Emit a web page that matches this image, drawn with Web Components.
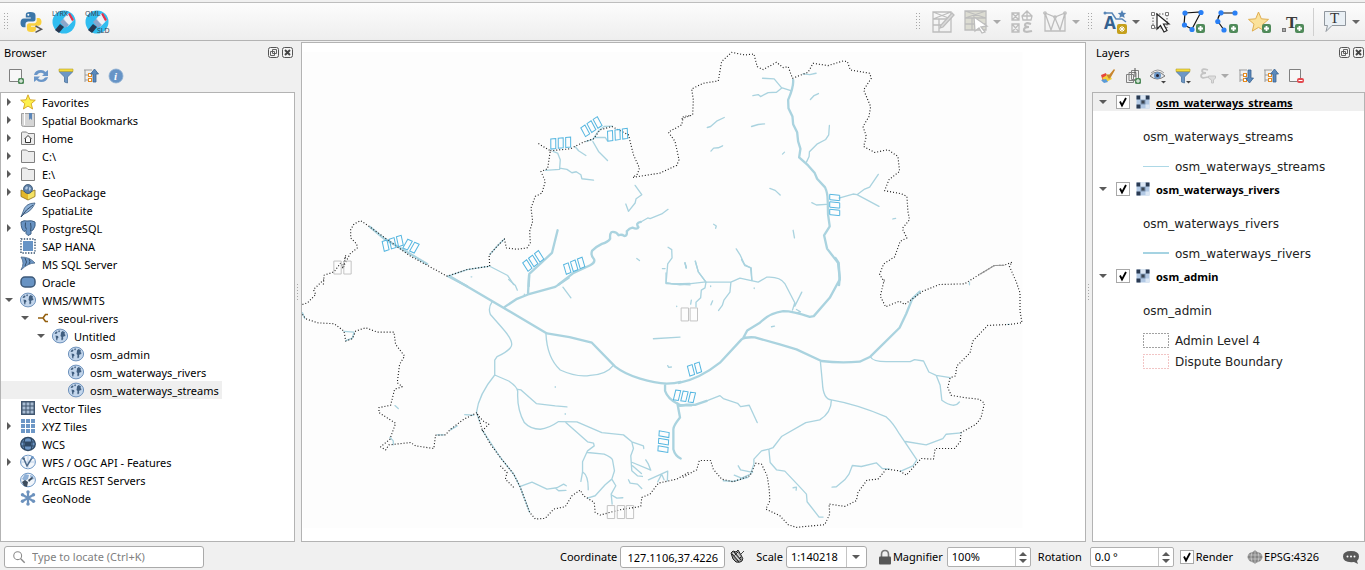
<!DOCTYPE html>
<html lang="en">
<head>
<meta charset="utf-8">
<title>Map workspace</title>
<style>
  html, body { margin: 0; height: 100%; }
  body {
    font: 11px/18px "Noto Sans", "Open Sans", sans-serif;
    color: #000;
    background: #f0f0f0;
  }
</style>
</head>
<body>
<map-workspace></map-workspace>

<script>
/* ---------- icon drawings ---------- */
const PLUS = (x, y) => `<rect x="${x}" y="${y}" width="9" height="9" rx="2" fill="#508a5a"/><path d="M${x + 4.5} ${y + 2}v5M${x + 2} ${y + 4.5}h5" stroke="#fff" stroke-width="1.8"/>`;
const PLUS_S = (x, y) => `<rect x="${x}" y="${y}" width="6" height="6" rx="1.5" fill="#508a5a"/><path d="M${x + 3} ${y + 1}v4M${x + 1} ${y + 3}h4" stroke="#fff" stroke-width="1"/>`;
const GLOBE = `<ellipse cx="8" cy="8" rx="7.600" ry="6.900" fill="#c3d6ec" stroke="#6f93bd" stroke-width="1"/><path d="M2.500 5.500l1.500-2 1.500.3-.3 1.500-1.500.7zM6 3l1.500-.8.5 1-1 1.300zM3.500 7.500l2.500.5.5 1.500-1 1-.2 2-1-.3-.3-2zM9 4.500l1.500-1.500 1 .5 1.500 1-.5 1.500 1 1-.5 1.500-1-.5-1 1.500.3 1.500-1.300 1.500-.7-1 .2-2.500-1-1 .3-1.500z" fill="#415f80"/>`;
const PAINT = `<circle cx="12" cy="12" r="11.500" fill="#30bdf0"/><path d="M11 9l6-6 5 7-7 7z" fill="#d4dbe8"/><path d="M16 4l2-1 4 7-2 1z" fill="#e3314c"/><path d="M12 8l4-4 4 8-4 4z" fill="#eef1f7"/><path d="M8 12l3-3 6 6-4 3z" fill="#8ba6ca"/><path d="M8 14l4 3-5 6-4-3z" fill="#27374f"/>`;
const TREE = `<path d="M1 2h8M2 2v12M2 7h3M2 12h3" stroke="#9a9a9a" fill="none"/><rect x="5.500" y="5.500" width="3" height="3" fill="#fff" stroke="#e68a1e"/><rect x="5.500" y="10.500" width="3" height="3" fill="#fff" stroke="#e68a1e"/>`;
const FUNNEL = `<path d="M1.500 2h13v2l-5 5v6l-3-1V9l-5-5z" fill="#6d97c6" stroke="#4c739d" stroke-width=".8"/><path d="M1 1h14v2.500H1z" fill="#f5dc3b" stroke="#b3a02c" stroke-width=".6"/>`;
const FOLDER = `<path d="M1.500 3q0-1 1-1h4l1.500 1.500h6.500v11h-13z" fill="#ececec" stroke="#808080"/>`;
const GRAYNET = (a) => `<g fill="none" stroke="#bdbdbd" stroke-width="1.300">${a}</g>`;
const LETTER = (x, y, s, t, c, extra = '') => `<text x="${x}" y="${y}" font-size="${s}" fill="${c}" ${extra}>${t}</text>`;

const ICONS = {
  python: [24, `<path d="M11.500 2c-4 0-4.700 1-4.700 3.300V7.500h5v.9H5C2.500 8.400 1.500 10.500 1.500 13s1.200 4.200 3 4.200H6.500v-2.900c0-1.800 1.300-2.800 2.800-2.800h4.900c1.300 0 2.300-1 2.300-2.300V5.300c0-2.300-1.900-3.300-5-3.300z" fill="#3b76a8"/><path d="M12.200 22c4 0 4.700-1 4.700-3.300v-2H12v-1h7.500c2.300 0 3-2 3-3.900s-1-3.800-3-3.800h-1.800v2.400c0 1.800-1.300 2.900-2.800 2.900h-4.700c-1.300 0-2.300 1-2.300 2.300v3.100c0 2.300 1.400 3.300 4.300 3.300z" fill="#fad13f"/><circle cx="9.300" cy="4.800" r="1" fill="#fff"/><path d="M16.500 16l6 3.200-6 3.200" fill="none" stroke="#555" stroke-width="1.500"/>`],
  lyrx: [24, PAINT + LETTER(0, 6, 7, 'LYRX', '#3c4858')],
  qml: [24, PAINT + LETTER(0, 6, 7, 'QML', '#3c4858') + LETTER(12, 23, 7, 'SLD', '#3c4858')],
  meshEdit: [24, GRAYNET('<path d="M2 2h18v20H2zM2 9h18M2 15h11M8 9v13M2 2l18 7M20 2L2 9"/><path d="M21 3l2 2L12 17l-3 1 1-3z" fill="#d9d9d9"/>')],
  meshSelect: [24, `<path d="M1 1h21v19H1z" fill="#dcdcd2"/>` + GRAYNET('<path d="M1 1h21v19H1zM1 8h21M8 8v12M1 1l21 7M22 1L1 8M1 14h21"/><path d="M10 7l13 9-6 1 4 5-3 1-3-5-4 3z" fill="#fff"/>')],
  meshExpr: [24, GRAYNET('<path d="M2 3h7v7H2zM2 3l7 7M9 3l-7 7M2 14h7v8H2zM2 14l7 8M9 14l-7 8M17 1l5 5-1 4h-8l-1-4zM17 1v9M12 6h10"/><path d="M21 14q-6-2-6 1 0 2 4 2-5 0-5 3 0 3 8 1" stroke-width="2.200"/>')],
  meshTrans: [24, GRAYNET('<path d="M2 3v18h20V3M2 3l6 17L12 8l5 12 5-17M2 3l10 4 10-4"/><circle cx="2" cy="3" r="1.200"/><circle cx="22" cy="3" r="1.200"/><circle cx="12" cy="7" r="1.200"/>')],
  annoStyle: [24, `<path d="M1 3h8l4 6h6l4 3" fill="none" stroke="#5a86b6" stroke-width="1.500"/><circle cx="2" cy="3" r="1.500" fill="#5a86b6"/><path d="M19 0l1.200 2.800 3 .2-2.200 2 .7 3L19 6.500 16.300 8l.7-3-2.200-2 3-.2z" fill="#5180b4"/>` + LETTER(1, 19, 17, 'A', '#34618f', 'font-weight="bold"') + `<rect x="14" y="14" width="10" height="10" rx="2" fill="#c5a01c"/><path d="M19 16v6M16 19h6M17 17l4 4M21 17l-4 4" stroke="#fff" stroke-width="1"/>`],
  cursor: [24, `<path d="M4 4h14v14H4z" fill="none" stroke="#555" stroke-dasharray="1.500 1.500"/><g fill="#fff" stroke="#777"><path d="M2.500 2.500h3v3h-3zM16.500 2.500h3v3h-3zM2.500 15.500h3v3h-3z"/></g><path d="M8 4v15l3.500-3.500 3.500 6.500 3-1.500-3.500-6.500H20z" fill="#fff" stroke="#222" stroke-width="1.200"/>`],
  polygon: [24, `<path d="M3 3l16-1-9 17-8-4z" fill="#fafafa" stroke="#111" stroke-width="1.200"/><g fill="#2a80f5"><circle cx="3" cy="3" r="2.600"/><circle cx="19" cy="2.500" r="2.600"/><circle cx="2.500" cy="15" r="2.600"/><circle cx="10" cy="19.500" r="2.600"/></g>` + PLUS(14, 14)],
  curve: [24, `<path d="M20 3H6q-5 6-2 10l5 7" fill="none" stroke="#111" stroke-width="1.200"/><g fill="#2a80f5"><circle cx="6" cy="2.800" r="2.600"/><circle cx="20" cy="3" r="2.600"/><circle cx="2.800" cy="11.500" r="2.600"/><circle cx="9" cy="20" r="2.600"/></g>` + PLUS(14, 14)],
  marker: [24, `<path d="M10.500 2l2.800 6.800 7.200.6-5.500 4.700 1.700 7-6.200-3.700-6.200 3.700 1.700-7L.5 9.400l7.200-.6z" fill="#fbe29b" stroke="#e0ae50"/>` + PLUS(14, 14)],
  textPoint: [24, LETTER(5, 18, 17, 'T', '#3c3c3c', 'font-family="Liberation Serif" font-weight="bold"') + `<rect x="1.500" y="18.500" width="3" height="3" fill="#aaa" stroke="#777"/>` + PLUS(14, 14)],
  textBubble: [24, `<path d="M1.500 1.500h21v14H9l-6 6 1.500-6h-3z" fill="#eaf0f5" stroke="#90979e"/>` + LETTER(7, 13, 15, 'T', '#333', 'font-family="Liberation Serif"')],

  add: [16, `<path d="M1.500 1.500h12v12h-12z" fill="#f7f7f7" stroke="#808080"/>` + PLUS_S(10, 10)],
  refresh: [16, `<path d="M1 7q1-5 7-5 3 0 4.500 2L15 2v6H9l2-2q-4-3-7 1zM15 9q-1 5-7 5-3 0-4.500-2L1 14V8.500h6L5 10.500q4 3 7-1z" fill="#6a96c8"/>`],
  filter: [16, FUNNEL],
  collapse: [16, TREE + `<path d="M11.500 1l4 5h-2.500v8h-3V6H7.500z" fill="#5a89bd" stroke="#3a638f" stroke-width=".8"/>`],
  expand: [16, TREE + `<path d="M11.500 15l4-5h-2.500V2h-3v8H7.500z" fill="#5a89bd" stroke="#3a638f" stroke-width=".8"/>`],
  info: [16, `<circle cx="8" cy="8" r="7" fill="#6794c6" stroke="#8fb0d2" stroke-width=".8"/>` + LETTER(6, 12, 11, 'i', '#fff', 'font-family="Liberation Serif" font-style="italic" font-weight="bold"')],
  brush: [16, `<path d="M1 7l5-2 2 8-5 1z" fill="#e7453c"/><path d="M2 10l7-4 3 5-6 3z" fill="#f2cf3a"/><path d="M1 12l5-1 2 3-4 1z" fill="#5a9bd8"/><path d="M6 6l3 5 2-2L15 2l-1-1-5 6z" fill="#c8862e"/>`],
  group: [16, `<g fill="#f0f0f0" stroke="#808080"><path d="M1.500 6.500h7v8h-7zM4 4.500h7v8H4zM6.500 2.500h7v9h-7z"/></g><path d="M10 0v9" stroke="#555"/>` + PLUS_S(10, 10)],
  eye: [16, `<path d="M0 8q7-8 15 0-8 6-15 0z" fill="#e3e8ee" stroke="#7a7a7a"/><circle cx="7.500" cy="7.500" r="3.500" fill="#6c97c7"/><circle cx="7.500" cy="7.500" r="1.500" fill="#223"/><path d="M1 5q7-6 13 0" fill="none" stroke="#999"/><path d="M11 13h5l-2.500 2.500z" fill="#444"/>`],
  filterMenu: [16, FUNNEL + `<path d="M11 13h5l-2.500 2.500z" fill="#444"/>`],
  exprFilter: [16, `<path d="M8 2Q2 0 2 3q0 2 4 2-5 0-5 3 0 3 7 1" fill="none" stroke="#c4c4c4" stroke-width="1.800"/><path d="M8.500 8h7v2l-2 2v3h-2v-3l-3-2z" fill="#ddd" stroke="#c4c4c4"/>`],
  remove: [16, `<path d="M1.500 1.500h11v12h-11z" fill="#f7f7f7" stroke="#808080"/><rect x="9" y="10" width="7" height="5" rx="2" fill="#e34a50"/><path d="M10.500 12.500h4" stroke="#fff"/>`],

  star: [16, `<path d="M8 .8l2 5 5.300.4-4.100 3.500 1.400 5.300L8 12.100 3.400 15l1.400-5.300L.7 6.200 6 5.800z" fill="#fdf04c" stroke="#d4a31f" stroke-width=".9"/>`],
  bookmark: [16, `<path d="M1.500 1.500h13v13h-11q-2 0-2-2z" fill="#d5d5d5" stroke="#a0a0a0"/><path d="M4.500 1v12" stroke="#fff"/><path d="M9 1h3v7l-1.500-1.500L9 8z" fill="#5b86b8"/>`],
  home: [16, FOLDER + `<path d="M4.500 9L8 5.500 11.500 9M5.500 8.500v4h5v-4" fill="#fff" stroke="#333"/>`],
  folder: [16, FOLDER],
  gpkg: [16, `<path d="M1 6l7 3v7l-7-3.500z" fill="#e3b72a"/><path d="M15 6L8 9v7l7-3.500z" fill="#f5e264"/><path d="M1 6l7 3 7-3v6.500L8 16l-7-3.500z" fill="none" stroke="#8a6d18" stroke-width=".8"/><circle cx="8" cy="5" r="4.500" fill="#5e7fa6" stroke="#34516f" stroke-width=".8"/><path d="M5 4l2-2 1 2-2 2zM9 3l2 1-1 3-1-1z" fill="#b7cde6"/>`],
  feather: [16, `<path d="M15 1Q5 1 3 10L1 15l3-3Q12 9 15 1z" fill="#8fb2d8" stroke="#47678a" stroke-width=".9"/><path d="M1 15Q6 7 13 3" fill="none" stroke="#34506e"/>`],
  elephant: [16, `<path d="M1 2q3-2 6-1 5-1 8 1 1 4-2 8l-2 1v3l-3 1.500-2-2v-3l-2 1Q1 9 1 2z" fill="#6893c3" stroke="#3e6085"/><path d="M5.500 2.500q-1 4 1 7M10.500 3q1 4 0 8" fill="none" stroke="#34506e"/>`],
  hana: [16, `<rect x="3" y="3" width="10" height="10" fill="#6794c6"/><path d="M1 1h14v14H1z" fill="none" stroke="#34506e" stroke-width="1.400" stroke-dasharray="1.400 1.400"/>`],
  mssql: [16, `<path d="M1 1q9 0 14 6Q8 7 1 14 5 7 1 1z" fill="#6d97c6" stroke="#47678a" stroke-width=".8"/><path d="M5 2q3 4 0 8M9 3q2 3 0 5" fill="none" stroke="#34506e"/>`],
  oracle: [16, `<rect x="1" y="3" width="14" height="10" rx="4" fill="#6893c3" stroke="#3c5878" stroke-width="1.500"/>`],
  globe: [16, GLOBE],
  connect: [16, `<path d="M2 8h5M12 4.500H9.500L7 8l2.500 3.500H12" fill="none" stroke="#94600f" stroke-width="1.600"/>`],
  vtiles: [16, `<rect x="1" y="1" width="14" height="14" fill="#41566f"/><g fill="#a9bdd4"><path d="M2.500 2.500h3v3h-3zM6.500 2.500h3v3h-3zM10.500 2.500h3v3h-3zM2.500 6.500h3v3h-3zM6.500 6.500h3v3h-3zM10.500 6.500h3v3h-3zM2.500 10.500h3v3h-3zM6.500 10.500h3v3h-3zM10.500 10.500h3v3h-3z"/></g>`],
  xyz: [16, `<path d="M1 1h4v4H1zM6 1h4v4H6zM11 1h4v4h-4zM1 6h4v4H1zM6 6h4v4H6zM11 6h4v4h-4zM1 11h4v4H1zM6 11h4v4H6zM11 11h4v4h-4z" fill="#6d97c6"/>`],
  wcs: [16, `<ellipse cx="8" cy="8" rx="7.300" ry="6.500" fill="#6c95c4" stroke="#2e4864" stroke-width="1.300"/><path d="M1 6h14M1 10h14M5 2q-2 6 0 12M11 2q2 6 0 12" fill="none" stroke="#2e4864" stroke-width="1.200"/><rect x="5" y="6" width="6" height="4" fill="#2e4864"/>`],
  wfs: [16, `<ellipse cx="8" cy="8" rx="7.400" ry="6.800" fill="#f2f6fb" stroke="#6d97c6"/><path d="M1 8h14M8 1v14" stroke="#bcd0e8"/><path d="M3.500 4L7 12l5.500-9" fill="none" stroke="#4d6b8c" stroke-width="1.500"/><circle cx="12.500" cy="3.500" r="1.500" fill="#6d97c6"/><circle cx="3.500" cy="4.500" r="1.300" fill="#4d6b8c"/>`],
  arcgis: [16, `<ellipse cx="8" cy="8" rx="7.400" ry="6.800" fill="#f2f6fb" stroke="#6d97c6"/><path d="M2 7l3-5 4 1-1 4-3 2zM10 3l3 1 1 3-3 1z" fill="#8fb0d6"/><path d="M2 10l3-2 3 2-1 5-3-1zM8 8l4-3 1 1-4 4z" fill="#3d4c5c"/>`],
  geonode: [16, `<path d="M8 1v14M2 4.500l12 7M14 4.500l-12 7" stroke="#6d92bd" stroke-width="2.200"/><g fill="#6d92bd"><circle cx="8" cy="2" r="1.700"/><circle cx="8" cy="14" r="1.700"/><circle cx="2.500" cy="4.800" r="1.700"/><circle cx="13.500" cy="4.800" r="1.700"/><circle cx="2.500" cy="11.200" r="1.700"/><circle cx="13.500" cy="11.200" r="1.700"/></g>`],
  raster: [14, `<path d="M.5.5h13v13H.5z" fill="#b1c8e4"/><path d="M.5.500h4v4h-4zM9.500.5h4v4h-4zM.5 9.500h4v4h-4z" fill="#2a3a52"/><path d="M4.500 4.500h5v5h-5z" fill="#7890ad"/><path d="M5.500 5.500h3v3h-3z" fill="#3b4653"/><path d="M4.500.5h5v4h-5zM9.500 9.500h4v4h-4z" fill="#dce7f4"/>`],

  search: [16, `<circle cx="6.500" cy="6.500" r="4.500" fill="none" stroke="#8a8a8a" stroke-width="1.200"/><path d="M10 10l4.500 4.500" stroke="#8a8a8a" stroke-width="1.600"/>`],
  mouse: [16, `<path d="M2 4l2-2 3 1 2-2 3 5q3 4 1 6t-6 1L4 10z" fill="#999" stroke="#222"/><path d="M3 5l7 8M5 3l7 8M9 3L5 7M12 8l-4 4" stroke="#222"/><path d="M4 4l6 7M8 4l3 4" stroke="#eee"/><path d="M12 5l3-3" stroke="#444"/>`],
  lock: [16, `<path d="M4.500 8V5.500q0-4 3.500-4t3.500 4V8" fill="none" stroke="#777" stroke-width="1.600"/><rect x="2" y="7.500" width="12" height="8" rx="1" fill="#575757"/>`],
  crs: [16, `<path d="M8 1l7 7-7 7-7-7z" fill="#858585"/><ellipse cx="8" cy="8" rx="7.500" ry="5.500" fill="#858585"/><path d="M1 6h14M1 10h14M8 1v14M5 3q-2 5 0 10M11 3q2 5 0 10" fill="none" stroke="#ddd" stroke-width=".6"/>`],
  bubble: [16, `<path d="M8 2q8 0 8 5.500 0 3-2 4.500l1 3-4-2q-11 1-11-5.500Q0 2 8 2z" fill="#595959"/><g fill="#fff"><circle cx="4.500" cy="7.500" r="1"/><circle cx="8" cy="7.500" r="1"/><circle cx="11.500" cy="7.500" r="1"/></g>`],
  float: [11, `<rect x=".5" y=".5" width="10" height="10" rx="2" fill="#f4f4f4" stroke="#555"/><path d="M4.500 2.500h4v4h-4zM2.500 4.500h4v4h-4z" fill="#f4f4f4" stroke="#555" stroke-width=".9"/>`],
  close: [11, `<rect x=".5" y=".5" width="10" height="10" rx="2" fill="#f4f4f4" stroke="#555"/><path d="M3 3l5 5M8 3l-5 5" stroke="#444" stroke-width="1.900"/>`],
};

/* Small base: clones a component's template into its open shadow root. */
class Base extends HTMLElement {
  connectedCallback() {
    if (this.shadowRoot) return;
    const t = document.createElement('template');
    t.innerHTML = this.render();
    this.attachShadow({ mode: 'open' }).append(t.content.cloneNode(true));
  }
  at(name, fallback = '') { return this.getAttribute(name) ?? fallback; }
}

customElements.define('ui-icon', class extends Base {
  render() {
    const [box, art] = ICONS[this.at('name')];
    const size = this.at('size', box);
    return `<style>:host{display:inline-flex;flex:none}svg{display:block;overflow:visible}</style>
      <svg width="${size}" height="${size}" viewBox="0 0 ${box} ${box}" aria-hidden="true">${art}</svg>`;
  }
});

/* Toolbar button, with an optional drop-down arrow. */
customElements.define('tool-button', class extends Base {
  render() {
    return `<style>
      :host{display:flex;flex:none}
      button{all:unset;display:flex;align-items:center;gap:5px;cursor:default}
      .box{display:flex;justify-content:center;width:var(--tool,25px)}
      .arrow{width:0;border:4px solid transparent;border-top-color:#666;border-bottom:0}
      :host([muted]) .arrow{border-top-color:#aaa}
      </style>
      <button type="button" aria-label="${this.at('label')}"><span class="box"><ui-icon name="${this.at('icon')}"></ui-icon></span>${this.hasAttribute('menu') ? '<span class="arrow"></span>' : ''}</button>`;
  }
});

/* Dotted grip for toolbars and splitters. */
customElements.define('drag-grip', class extends Base {
  render() {
    return `<style>
      :host{display:block;flex:none;width:6px;height:18px;align-self:center;
        background:conic-gradient(at 1px 1px,transparent 75%,#a8a8a8 0) 0 0/3px 3px}
      :host([thin]){width:2px;height:16px;justify-self:center}
      </style>`;
  }
});

customElements.define('main-toolbar', class extends Base {
  render() {
    return `<style>
      :host{display:flex;align-items:center;gap:8px;height:37px;margin-top:2px;padding:0 5px 0 4px;
        border-top:1px solid #bdbdbd;border-bottom:1px solid #b3b3b3;
        background:linear-gradient(#fcfcfc,#eeeeee)}
      .sep{width:1px;height:28px;background:#d0d0d0}
      .push{margin-left:auto}
      </style>
      <drag-grip></drag-grip>
      <tool-button icon="python" label="Python console"></tool-button>
      <tool-button icon="lyrx" label="LYRX style"></tool-button>
      <tool-button icon="qml" label="QML to SLD"></tool-button>
      <drag-grip class="push"></drag-grip>
      <tool-button icon="meshEdit" label="Digitize mesh"></tool-button>
      <tool-button icon="meshSelect" label="Select mesh" menu muted></tool-button>
      <tool-button icon="meshExpr" label="Transform vertices"></tool-button>
      <tool-button icon="meshTrans" label="Force by lines" menu muted></tool-button>
      <drag-grip></drag-grip>
      <tool-button icon="annoStyle" label="Annotation layer" menu></tool-button>
      <tool-button icon="cursor" label="Modify annotations"></tool-button>
      <tool-button icon="polygon" label="Polygon annotation"></tool-button>
      <tool-button icon="curve" label="Line annotation"></tool-button>
      <tool-button icon="marker" label="Marker annotation"></tool-button>
      <tool-button icon="textPoint" label="Text annotation"></tool-button>
      <span class="sep"></span>
      <tool-button icon="textBubble" label="Text balloon" menu></tool-button>`;
  }
});

/* Dock with a title row, a tool row and a framed body. */
customElements.define('dock-panel', class extends Base {
  render() {
    return `<style>
      :host{display:flex;flex-direction:column;min-width:0}
      header{display:flex;align-items:center;gap:3px;height:20px;padding:1px var(--edge,1px) 0 4px}
      h2{margin:0 auto 0 0;font:inherit;padding-top:1px}
      header button{all:unset;display:flex}
      .tools{display:flex;align-items:center;gap:9px;height:28px;padding:0 8px 2px}
      .body{flex:1;background:#fff;border:1px solid #b3b3b3;overflow:hidden}
      </style>
      <header><h2>${this.at('title-text')}</h2>
        <button type="button" aria-label="Float"><ui-icon name="float"></ui-icon></button>
        <button type="button" aria-label="Close"><ui-icon name="close"></ui-icon></button></header>
      <div class="tools"><slot name="tools"></slot></div>
      <div class="body"><slot></slot></div>`;
  }
});

customElements.define('tree-row', class extends Base {
  render() {
    const open = this.at('state');
    return `<style>
      :host{display:flex;align-items:center;width:fit-content;height:18px;padding-right:3px;
        padding-left:calc(2px + 16px * ${this.at('level', '0')})}
      :host([selected]){background:#efefef}
      .arrow{display:flex;width:16px;padding-left:4px;box-sizing:border-box}
      i{width:0;height:0;border:4px solid transparent}
      .shut i{border-left-color:#5a5a5a;border-right:0}
      .open i{border-top-color:#5a5a5a;border-bottom:0;margin-left:-2px}
      ui-icon{margin:0 6px 0 1px}
      .text{padding-top:2px}
      </style>
      <span class="arrow ${open}">${open ? '<i></i>' : ''}</span><ui-icon name="${this.at('icon')}"></ui-icon><span class="text"><slot></slot></span>`;
  }
});

customElements.define('check-box', class extends Base {
  render() {
    return `<style>
      :host{display:flex}
      label{display:flex;align-items:center;gap:2px}
      input{appearance:none;width:14px;height:14px;margin:0;border:1px solid #a8a8a8;background:#fff}
      input:checked{background:#fff url("data:image/svg+xml,%3Csvg xmlns='http://www.w3.org/2000/svg' viewBox='0 0 12 12'%3E%3Cpath d='M3 5.500l2 4L9 2' fill='none' stroke='%23000' stroke-width='1.800'/%3E%3C/svg%3E") center/12px no-repeat}
      </style><label><input type="checkbox" checked aria-label="${this.at('label')}"><slot></slot></label>`;
  }
});

customElements.define('layer-item', class extends Base {
  render() {
    return `<style>
      :host{display:block}
      .head{display:flex;align-items:center;height:18px;padding-left:6px;font-weight:bold}
      .head span{padding-top:2px}
      :host([current]) .head{background:#efefef;text-decoration:underline}
      i{border:4px solid transparent;border-top-color:#5a5a5a;border-bottom:0;margin-right:9px}
      ui-icon{margin:0 6px 0 6px}
      .legend{padding:17px 0 3px 50px;font:12px/18px "DejaVu Sans",sans-serif;color:#222}
      p{margin:0 0 10px}
      </style>
      <div class="head"><i></i><check-box label="${this.at('name')}"></check-box><ui-icon name="raster"></ui-icon><span>${this.at('name')}</span></div>
      <div class="legend"><p>${this.at('name')}</p><slot></slot></div>`;
  }
});

customElements.define('legend-entry', class extends Base {
  render() {
    const art = {
      stream: '<path d="M0 7.500h26" stroke="#add8e6"/>',
      river: '<path d="M0 7h26" stroke="#a5d3e2" stroke-width="2"/>',
      admin: '<path d="M.5.500h25v14H.5z" stroke="#444" stroke-dasharray="1 2"/>',
      dispute: '<path d="M.5.500h25v14H.5z" stroke="#e58a8a" stroke-dasharray="1 2"/>',
    }[this.at('kind')];
    return `<style>
      :host{display:flex;align-items:center;gap:6px;height:21px;font:12px/18px "DejaVu Sans",sans-serif;color:#222}
      </style><svg width="26" height="15" viewBox="0 0 26 15" fill="none" aria-hidden="true">${art}</svg><slot></slot>`;
  }
});

/* Map: each translated group is one quadrant, digitised at three units per map pixel. */
customElements.define('map-canvas', class extends Base {
  render() {
    const tofu = (x, y, angle, n) => `<g transform="translate(${x} ${y}) rotate(${angle})">` +
      Array.from({ length: n }, (_, i) => `<path transform="translate(${i * 7.5} 0)" d="M-2 -5h5l-1 10h-5z"/>`).join('') + '</g>';
    return `<style>
      :host{display:block;position:relative;min-width:0;min-height:0;background:#fff;border:1px solid #b3b3b3}
      svg{position:absolute;inset:0;width:100%;height:100%}
      path{fill:none;stroke-linejoin:round;stroke-linecap:round}
      .border path{stroke:#1a1a1a;stroke-width:3.400;stroke-dasharray:3 6;stroke-linecap:butt}
      .thick path{stroke:#aad3df;stroke-width:7}
      .thin path{stroke:#aad3df;stroke-width:4}
      .tag path{stroke:#55b6e0;stroke-width:1;stroke-linejoin:miter}
      .place path{stroke:#c4c4c4;stroke-width:1;stroke-linejoin:miter}
      </style>
      <svg viewBox="302 43 783 499" role="img" aria-label="Seoul rivers and streams">
      <rect x="302" y="52" width="721" height="477" fill="#fdfdfd"/>
      <g transform="translate(300 45) scale(.33333)">
        <g class="thin">
          <path d="M443 695L500 675 568 665M568 630L590 605 612 583M568 665L622 693 640 720M735 377L778 374 780 345 772 325 758 320M778 370L800 374 815 384 828 381 842 390 845 402 880 406M825 306L835 318 857 332M878 290L895 320 922 347M885 278L915 278 922 288M858 290L878 284 895 258 912 245 937 244M1005 422L1025 450 1008 462 1005 475 985 500 977 478M1022 532L1043 520 1050 522 1085 508 1104 494M1104 608L1115 615 1116 640 1103 658 1098 715 1120 718 1170 717M1010 642L1018 648M1087 672h8M1155 655L1159 670M512 697h2"/></g>
        <g class="thick"><path d="M208 547L250 582 380 658M443 695L500 725M772 557L755 625 687 688 685 725M775 720L820 685 870 662Q885 655 882 645 870 632 876 618 890 605 905 598 925 592 930 582 928 562 938 562 950 562 955 572 965 568 972 574 982 575 980 560 988 550 997 549 1012 555 1015 548 1005 535 1022 532"/></g>
        <g class="border">
          <path d="M68 720L70 692 100 682 120 655 128 672 135 632 125 672 148 628 170 610 168 598 150 580 150 555 160 538 180 528 205 545 260 585 330 635 440 695 500 675 568 665 566 632 590 605 612 583 618 610 650 614 680 610 690 595 688 560 697 530 692 490 705 455 725 445 735 410 722 380 742 372 750 318 712 295"/>
          <path d="M750 318L810 312 850 292 880 282 900 255 935 245 985 270 1000 330 1018 370 1012 388 998 398 1080 385 1130 362 1137 345 1125 290 1105 262 1145 240 1150 215 1170 212"/></g>
      </g>
      <g transform="translate(680 45) scale(.33333)">
        <g class="thin">
          <path d="M248 100L283 102 305 128 333 137M305 130L290 142 265 143 242 155 235 149 219 152M370 87L390 89 409 85M416 146L403 152 392 164M82 248L92 245 110 229 133 218M215 245L235 239 254 237M93 319L101 310 115 309 128 303M449 242L447 270 438 284 413 297 389 321 388 335 380 352M308 328L314 322M270 431L286 437 301 451M101 539L109 544 107 551M340 557L344 580M396 474L410 481 440 479M478 460L520 448 532 450 555 433 570 427 596 389M532 450L570 470 598 485M640 523L648 521M169 613L180 630 194 660 212 670 216 708M46 650L55 682 78 713M15 655L19 670"/></g>
        <g class="thick"><path d="M340 105Q342 125 325 165L326 190 338 215 340 238 352 262 355 290 362 312 358 338 385 362 405 385 412 402 436 428Q444 445 444 470L445 510 450 545 433 572 442 612 475 655 480 700 478 722"/></g>
        <g class="border">
          <path d="M5 222L38 210 40 165 35 132 70 115 115 108 125 50 155 22 195 30 222 27 232 65 250 74 290 52 310 68 325 65 338 100 385 82 400 55 445 62 490 48 503 50 512 75 570 85 575 100 552 135 573 185 568 215 550 245 560 275 552 305 585 323 625 315 655 335 660 380 628 405 615 438 665 447 682 455 685 500 690 525 668 552 682 580 662 590 645 637 612 658 600 690 614 712"/></g>
      </g>
      <g transform="translate(300 280) scale(.33333)">
        <g class="thin">
          <path d="M575 67Q562 85 570 105L605 145Q645 190 630 205 620 218 590 232L583 242 583 287Q535 345 528 400L538 428M583 287L625 305Q655 325 652 340 650 390 672 430 690 450 720 450 745 448 775 427L830 428 905 460 970 467 995 488 1030 500 1031 508M652 330L662 332 708 373 765 380 800 383M737 163Q740 235 780 272 830 295 870 288 920 285 940 257M795 428L862 488 880 492 882 500 862 515 847 548 847 578 842 607M862 520L912 525Q935 535 937 542L943 575 935 600 947 620 933 645 936 675M935 600L915 617 885 650 862 657M933 647L950 657 968 656M847 578Q865 590 864 632M995 488L1000 508 992 530 995 575 1012 590 1027 592M997 550L1052 573 1045 555 1037 542M997 560L1024 583M660 622L695 609 740 630 770 626 790 615 798 620M765 627L775 635 797 634M985 602L990 612 1012 615 1025 628M1045 602L1103 576 1102 605M1073 608L1085 585 1092 602M1060 178L1140 173M1098 -20V12L1170 16M788 23L812 55M625 0L645 18 651 32M493 406L520 408M545 452L600 535 640 585 660 625 688 700M283 379L293 388M130 156L160 158 155 176 135 184M268 475L278 485 278 497M5 100L12 117M1103 259L1106 264 1114 263M765 322v2M795 403v2M1130 80v1M672 44v1M410 467h20M450 452L470 440"/></g>
        <g class="thick"><path d="M453 -7L740 162 808 173 875 190 945 262Q975 285 1020 298T1100 313Q1125 313 1142 308M686 -12L683 43M612 83L650 58 683 45 765 22 805 -5M1095 315L1095 335Q1103 358 1130 372L1142 378 1175 378M1132 372L1140 415Q1120 440 1120 450L1120 510Q1125 530 1142 538"/></g>
        <g class="border">
          <path d="M1165 580L1130 600 1075 612 1050 645 1025 655 1022 682 960 692 900 708 885 700 882 670 850 650 840 633 815 650 795 683 760 690 735 718 705 720 688 700 660 625 640 585 600 535 570 495 545 450 530 400 490 420 450 450 435 467 405 468 400 508 345 500 330 490 265 497 255 512 240 503 268 480 285 432 235 400 235 385 270 378 282 330 305 322 290 310 297 255 312 230 285 195 280 158 230 158 195 145 165 155 155 178 135 185 130 155 100 133 50 130 15 118 5 105M5 75L20 70 45 45 38 30 70 0M530 405L548 425 565 435 545 455M600 560L620 580 615 600 640 625"/></g>
      </g>
      <g transform="translate(680 260) scale(.33333)">
        <g class="thin">
          <path d="M-40 70L0 76 78 67 153 68 180 56 235 68 260 53Q300 50 315 72L345 130 338 152M366 98L345 140M185 0L195 18 214 25 216 62M46 5L55 37 78 68 75 85 64 92 62 115 48 128 48 142M153 68L150 98 132 122 127 138 116 153M34 122L32 134M98 124L93 136M15 10L18 25M92 79v2M223 85v2M275 202L284 200M350 150L362 157 350 160M80 425L120 409 130 418 173 432 182 442 208 438 232 490M422 307L428 370Q430 420 455 422 530 435 620 473 640 490 660 525L712 602 700 620 662 637M455 422Q455 460 420 482L378 490 305 532 280 565 267 570 245 575 222 600 222 615 212 645 185 657 163 648M175 620L182 632 218 640M267 570L271 610 290 632 315 636 355 678 380 705 382 728 418 774 430 774M340 686L350 684 349 693M572 292Q580 307 620 307L692 307 705 301 732 305 748 338 770 348 812 355M770 348L782 378 787 423Q825 450 840 428M678 547L740 557 790 538 800 525 845 521M457 684L470 683 495 662 508 645 518 619 545 622 590 611 608 628 630 630M130 665L160 667 205 655M700 118L722 95M870 68v8M985 195h5"/></g>
        <g class="thick"><path d="M-3 371Q60 358 120 310L185 240Q195 232 225 234L300 255 350 270 425 305Q480 312 540 307L572 292 660 205 680 163 698 118 720 97M190 236L202 213 240 190Q270 160 310 155 340 155 390 172L402 170 450 115 480 60 477 10 467 -5M0 440L20 436 45 437 80 425"/></g>
        <g class="border">
          <path d="M614 60L602 110 618 142 660 125 675 135 730 95 780 75 855 73 900 45 945 18 975 17 998 8 990 20 1010 65 1022 100 1022 155 1028 190 990 195 925 198 880 245 872 280 832 320 828 350 812 355 805 385 815 408 855 415 900 420 915 432 905 475 890 495 845 520 842 548 825 568 767 568 762 600 725 598 680 648 660 635 620 630 595 660 562 663 535 700 530 725 495 742 448 735 450 765 435 797 380 802 350 805 325 797 300 770 258 750 270 725 268 690 262 650 245 615 228 612 210 650 160 668 125 660 100 630 92 604 58 604 50 632 8 655"/>
          <path d="M900 45L945 18 975 17" style="stroke-dasharray:none;stroke:#999"/></g>
      </g>
      <g class="tag">
        ${tofu(385, 246, -18, 3)}${tofu(407, 245, 24, 2)}${tofu(553, 144, -6, 3)}${tofu(585, 131, -34, 3)}${tofu(610, 136, -8, 3)}
        ${tofu(527, 266, -38, 3)}${tofu(567, 269, -22, 3)}${tofu(835, 198, 90, 3)}${tofu(691, 371, -20, 2)}${tofu(677, 396, 8, 3)}${tofu(664, 435, 94, 3)}
      </g>
      <g class="place">
        <path d="M333.500 261.500h7v13h-7zM343.500 261.500h7v13h-7zM681.500 308.500h7v13h-7zM690.500 308.500h7v13h-7zM607.500 506.500h7v13h-7zM617.500 506.500h7v13h-7zM626.500 506.500h7v13h-7z"/></g>
      </svg>`;
  }
});

/* Numeric field with up and down arrows. */
customElements.define('spin-box', class extends Base {
  render() {
    return `<style>
      :host{display:flex;box-sizing:border-box;width:84px;height:20px;border:1px solid #b0b0b0;border-radius:2px;background:#fff}
      input{all:unset;flex:1;min-width:0;padding-left:4px}
      div{display:flex;flex-direction:column;justify-content:center;gap:3px;padding:0 3px;border-left:1px solid #c4c4c4}
      button{all:unset;border:4px solid transparent}
      .up{border-bottom-color:#5a5a5a;border-top:0}
      .down{border-top-color:#5a5a5a;border-bottom:0}
      </style><input type="text" role="spinbutton" aria-label="${this.at('label')}" value="${this.at('value')}">
      <div><button type="button" class="up" aria-label="Increase"></button><button type="button" class="down" aria-label="Decrease"></button></div>`;
  }
});

customElements.define('status-bar', class extends Base {
  render() {
    return `<style>
      :host{display:flex;align-items:center;height:26px;padding:2px 6px 0 4px}
      .locate{display:flex;align-items:center;gap:6px;box-sizing:border-box;width:200px;height:22px;margin-right:auto;padding-left:7px;border:1px solid #aaa;border-radius:3px;background:#fff}
      .locate input{all:unset;flex:1;min-width:0}
      .locate input::placeholder{color:#808080;opacity:1}
      .coord{box-sizing:border-box;width:105px;height:22px;margin:0 4px 0 3px;padding:0;border:1px solid #aaa;border-radius:3px;text-align:center;font:inherit}
      .scale{position:relative;display:flex;margin:0 10px 0 3px}
      select{appearance:none;box-sizing:border-box;width:81px;height:22px;padding:0 0 0 4px;border:1px solid #aaa;border-radius:3px;font:inherit;color:inherit;
        background:linear-gradient(#c4c4c4,#c4c4c4) 76% 0/1px 100% no-repeat #fff}
      .scale::after{content:"";position:absolute;right:7px;top:9px;border:4px solid transparent;border-top-color:#5a5a5a;border-bottom:0;pointer-events:none}
      .f{display:flex;align-items:center;gap:4px}
      .mag{margin-right:7px}
      .rot{gap:8px;margin-right:6px}
      .crs{all:unset;display:flex;align-items:center;gap:1px;margin:0 24px 0 14px}
      .icon{all:unset;display:flex}
      .mouse{margin-right:11px}
      </style>
      <div class="locate"><ui-icon name="search" size="14"></ui-icon><input type="text" aria-label="Locate" placeholder="Type to locate (Ctrl+K)"></div>
      <label for="coord">Coordinate</label><input class="coord" id="coord" type="text" value="127.1106,37.4226">
      <button type="button" class="icon mouse" aria-label="Toggle extents"><ui-icon name="mouse"></ui-icon></button>
      <label for="scale">Scale</label><span class="scale"><select id="scale"><option>1:140218</option></select></span>
      <button type="button" class="icon" aria-label="Lock scale"><ui-icon name="lock"></ui-icon></button>
      <span class="f mag"><span>Magnifier</span><spin-box label="Magnifier" value="100%"></spin-box></span>
      <span class="f rot"><span>Rotation</span><spin-box label="Rotation" value="0.0 °"></spin-box></span>
      <check-box label="Render">Render</check-box>
      <button type="button" class="crs"><ui-icon name="crs"></ui-icon>EPSG:4326</button>
      <button type="button" class="icon" aria-label="Messages"><ui-icon name="bubble"></ui-icon></button>`;
  }
});

customElements.define('map-workspace', class extends Base {
  render() {
    const rows = [
      ['Favorites', 'star', 0, 'shut'], ['Spatial Bookmarks', 'bookmark', 0, 'shut'], ['Home', 'home', 0, 'shut'],
      ['C:\\', 'folder', 0, 'shut'], ['E:\\', 'folder', 0, 'shut'], ['GeoPackage', 'gpkg', 0, 'shut'],
      ['SpatiaLite', 'feather', 0, ''], ['PostgreSQL', 'elephant', 0, 'shut'], ['SAP HANA', 'hana', 0, ''],
      ['MS SQL Server', 'mssql', 0, ''], ['Oracle', 'oracle', 0, ''], ['WMS/WMTS', 'globe', 0, 'open'],
      ['seoul-rivers', 'connect', 1, 'open'], ['Untitled', 'globe', 2, 'open'], ['osm_admin', 'globe', 3, ''],
      ['osm_waterways_rivers', 'globe', 3, ''], ['osm_waterways_streams', 'globe', 3, '', 'selected'],
      ['Vector Tiles', 'vtiles', 0, ''], ['XYZ Tiles', 'xyz', 0, 'shut'], ['WCS', 'wcs', 0, ''],
      ['WFS / OGC API - Features', 'wfs', 0, 'shut'], ['ArcGIS REST Servers', 'arcgis', 0, ''], ['GeoNode', 'geonode', 0, ''],
    ].map(([text, icon, level, state, sel = '']) => `<tree-row icon="${icon}" level="${level}" state="${state}" ${sel}>${text}</tree-row>`).join('');
    const tools = (list) => list.map(([icon, label, more = '']) => `<tool-button slot="tools" icon="${icon}" label="${label}" ${more}></tool-button>`).join('');
    return `<style>
      :host{display:flex;flex-direction:column;min-height:100vh}
      main{flex:1;display:grid;grid-template-columns:295px 6px minmax(0,1fr) 6px 273px}
      dock-panel{--tool:16px}
      .browser{--edge:2px}
      map-canvas{margin-top:1px}
      </style>
      <main-toolbar></main-toolbar>
      <main>
        <dock-panel class="browser" title-text="Browser">${tools([['add', 'Add selected layers'], ['refresh', 'Refresh'], ['filter', 'Filter browser'], ['collapse', 'Collapse all'], ['info', 'Properties']])}${rows}</dock-panel>
        <drag-grip thin></drag-grip>
        <map-canvas></map-canvas>
        <drag-grip thin></drag-grip>
        <dock-panel title-text="Layers">${tools([['brush', 'Layer styling'], ['group', 'Add group'], ['eye', 'Map themes'], ['filterMenu', 'Filter legend'], ['exprFilter', 'Filter by expression', 'menu muted'], ['expand', 'Expand all'], ['collapse', 'Collapse all'], ['remove', 'Remove layer']])}
          <layer-item name="osm_waterways_streams" current><legend-entry kind="stream">osm_waterways_streams</legend-entry></layer-item>
          <layer-item name="osm_waterways_rivers"><legend-entry kind="river">osm_waterways_rivers</legend-entry></layer-item>
          <layer-item name="osm_admin"><legend-entry kind="admin">Admin Level 4</legend-entry><legend-entry kind="dispute">Dispute Boundary</legend-entry></layer-item>
        </dock-panel>
      </main>
      <status-bar></status-bar>`;
  }
});
</script>
</body>
</html>
